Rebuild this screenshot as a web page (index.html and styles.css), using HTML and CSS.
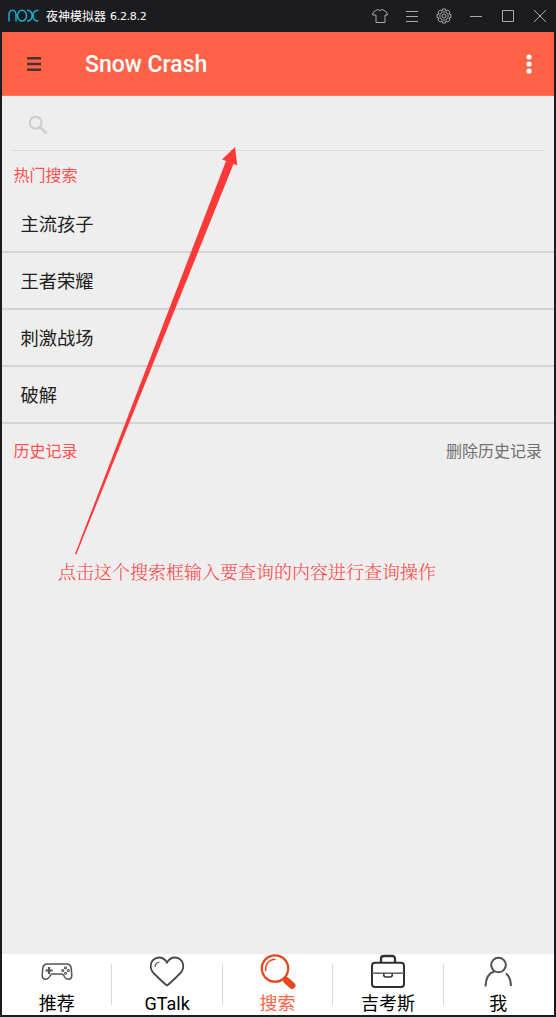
FILE: index.html
```html
<!DOCTYPE html>
<html lang="zh-CN">
<head>
<meta charset="utf-8">
<title>夜神模拟器</title>
<link rel="stylesheet" href="styles.css">
</head>
<body>
<div class="window">
  <header class="titlebar">
    <svg class="logo" width="32" height="14" viewBox="0 0 32 14" fill="none" stroke="#0fb2cf" stroke-width="1.500"><path d="M1 12.500V5.500a3.500 4.300 0 0 1 7 0v7"/><ellipse cx="14" cy="6.700" rx="4.500" ry="5.400"/><path d="M19 1.300c3.500 0 5 2.200 5 5.400s-1.500 5.400-5 5.400M30.500 1.300c-3.500 0-5.500 2.200-5.500 5.400s2 5.400 5.500 5.400"/></svg>
    <span class="caption">夜神模拟器</span><span class="version">6.2.8.2</span>
    <div class="controls">
      <svg width="16" height="16" viewBox="0 0 16 16"><path d="M5.500 1.500 1.500 4l-1 3H4v7.500h9V7h2.500l-1-3-4-2.500q-2.500 2-5 0z"/></svg>
      <svg width="16" height="16" viewBox="0 0 16 16"><path d="M2 3.500h12M2 8.500h12M2 13.500h12"/></svg>
      <svg width="16" height="16" viewBox="0 0 16 16"><path d="M6.500 1h3l.5 2 2-1 2 2-1 2 2 .5v3l-2 .5 1 2-2 2-2-1-.5 2h-3L6 13l-2 1-2-2 1-2-2-.5v-3L3 6 2 4l2-2 2 1z"/><circle cx="8" cy="8" r="4.200"/><circle cx="8" cy="8" r="2"/></svg>
      <svg width="16" height="16" viewBox="0 0 16 16"><path d="M2 8.500h12"/></svg>
      <svg width="16" height="16" viewBox="0 0 16 16"><path d="M2.500 2.500h11v11h-11z"/></svg>
      <svg width="16" height="16" viewBox="0 0 16 16"><path d="m2 2 12 12M14 2 2 14"/></svg>
    </div>
  </header>
  <div class="appbar">
    <svg class="menu" width="14" height="16" viewBox="0 0 14 16" stroke="#4a3030" stroke-width="2.500"><path d="M0 2.300h14M0 7.900h14M0 13.700h14"/></svg>
    <h1 class="title">Snow Crash</h1>
    <svg class="more" width="6" height="20" viewBox="0 0 6 20" fill="#fff"><circle cx="3" cy="3" r="2.600"/><circle cx="3" cy="10" r="2.600"/><circle cx="3" cy="17" r="2.600"/></svg>
  </div>
  <main class="content">
    <div class="search">
      <svg width="20" height="20" viewBox="0 0 20 20" fill="none" stroke="#cecece" stroke-width="2.200"><circle cx="7.700" cy="7.700" r="5.900"/><path d="m12 12 6.500 6.500" stroke-width="2.700"/></svg>
    </div>
    <div class="section hot"><span class="heading">热门搜索</span></div>
    <ul class="list">
      <li class="item">主流孩子</li>
      <li class="item">王者荣耀</li>
      <li class="item">刺激战场</li>
      <li class="item">破解</li>
    </ul>
    <div class="section history"><span class="heading">历史记录</span><span class="clear">删除历史记录</span></div>
  </main>
  <nav class="tabs">
    <div class="tab">
      <svg width="36" height="36" viewBox="0 0 36 36" fill="none" stroke="#555" stroke-width="1.500"><path d="M7.500 10h21q3.200.5 3.700 4l.6 7q.2 4-3.300 4.300-3 0-5-4.300-.8-1-2-1h-9q-1.200 0-2 1-2 4.300-5 4.300Q3 25 3.200 21l.6-7q.5-3.500 3.700-4z"/><path d="M10 13v7M6.500 16.500h7" stroke-width="2.200"/><g stroke-width="1.100"><circle cx="26.500" cy="13.700" r="1"/><circle cx="26.500" cy="19.300" r="1"/><circle cx="23.700" cy="16.500" r="1"/><circle cx="29.300" cy="16.500" r="1"/></g></svg>
      <span>推荐</span>
    </div>
    <div class="tab">
      <svg width="36" height="36" viewBox="0 0 36 36" fill="none" stroke="#484848" stroke-width="1.800"><path d="M18 31.500Q15 29.500 4.500 19C0 14 1.300 6.500 6.500 4.300c5-2 9 .3 11.500 4.200 2.500-3.900 6.500-6.200 11.500-4.200 5.200 2.200 6.500 9.700 2 14.700Q21 29.500 18 31.500z"/><path d="M6 13q.2-4.300 4.500-5" stroke-width="1.200"/></svg>
      <span>GTalk</span>
    </div>
    <div class="tab active">
      <svg width="36" height="36" viewBox="0 0 36 36" fill="none" stroke="#e6481d"><circle cx="15" cy="14.500" r="13.200" stroke-width="2.300"/><path d="M5.800 17C4.500 10.500 9 5.500 15.500 5.300" stroke-width="1.500"/><path d="m23.500 24 3 2.500" stroke-width="3"/><path d="m26.500 26.500 5.500 5" stroke-width="6.800" stroke-linecap="round"/></svg>
      <span>搜索</span>
    </div>
    <div class="tab">
      <svg width="36" height="36" viewBox="0 0 36 36" fill="none" stroke="#303030" stroke-width="2"><rect x="2" y="8.800" width="32" height="24.200" rx="3"/><path d="M11 8.500V4.800q0-2.800 2.800-2.800h8.400Q25 2 25 4.800v3.700" stroke-width="2.300"/><path d="M2 19.200h32" stroke="#666" stroke-width="1.600"/><path d="M13.800 19.500v1.500q0 2 2 2h4.400q2 0 2-2v-1.500" stroke-width="1.600"/></svg>
      <span>吉考斯</span>
    </div>
    <div class="tab">
      <svg width="36" height="36" viewBox="0 0 36 36" fill="none" stroke="#505050" stroke-width="2"><circle cx="18.500" cy="11" r="7.300"/><path d="M5.500 32.500C5.800 24 8.500 19 14.500 17.500M26 19.500c3.200 2.500 4.800 7 5 12.500"/></svg>
      <span>我</span>
    </div>
  </nav>
  <svg class="arrow" width="170" height="412" viewBox="70 145 170 412"><path fill="#fd3939" d="M235 147 237.300 165.200 233.500 164 76.300 554.500 75 554 226 161 222 159.500z"/></svg>
  <p class="note">点击这个搜索框输入要查询的内容进行查询操作</p>
</div>
</body>
</html>
```
FILE: styles.css
```css
* { box-sizing: border-box; }
body {
  margin: 0;
  font-family: Roboto, "Noto Sans CJK SC", sans-serif;
}
.window {
  position: relative;
  display: flex;
  flex-direction: column;
  height: 1017px;
  padding: 0 2px 2px;
  background: #1b1b20;
  overflow: hidden;
}
.titlebar {
  display: flex;
  align-items: center;
  flex: none;
  height: 32px;
  padding: 0 6px;
  color: #fff;
  font-size: 12px;
}
.caption { margin-left: 6px; padding-bottom: 2px; }
.version {
  margin-left: 4px;
  font-family: "DejaVu Sans", sans-serif;
  font-size: 11px;
  letter-spacing: -.3px;
}
.controls { display: flex; gap: 16px; margin-left: auto; }
.controls svg { fill: none; stroke: #aaaaac; stroke-width: 1; }
.appbar {
  display: flex;
  align-items: center;
  flex: none;
  height: 64px;
  padding: 0 22px 0 25px;
  background: #ff6347;
  border-bottom: 1px solid #f87961;
}
.title {
  margin: 0 0 0 44px;
  padding-top: 2px;
  color: #fff;
  font-size: 23px;
  font-weight: 500;
}
.more { margin-left: auto; }
.content { flex: 1; background: #eee; }
.search {
  height: 55px;
  margin: 0 10px;
  padding: 19px 0 0 16px;
  border-bottom: 1px solid #dadada;
}
.section {
  display: flex;
  justify-content: space-between;
  align-items: center;
  padding: 0 12px 0 11.500px;
  font-size: 16px;
}
.hot { height: 45px; }
.history { height: 52px; }
.heading { color: #ff5151; }
.clear { color: #707070; }
.list { margin: 0; padding: 0; list-style: none; }
.item {
  height: 57px;
  padding-left: 18.500px;
  border-bottom: 2px solid #d3d3d3;
  color: #202020;
  font-size: 18.300px;
  line-height: 57px;
}
.tabs {
  display: flex;
  flex: none;
  height: 61px;
  background: #fff;
}
.tab {
  position: relative;
  display: flex;
  flex: 1;
  flex-direction: column;
  align-items: center;
  padding-right: 1px;
  color: #000;
  font-size: 18px;
  line-height: 28px;
}
.tab + .tab::before {
  content: "";
  position: absolute;
  left: -1px;
  top: 10px;
  width: 1px;
  height: 41px;
  background: #d8d8d8;
}
.tab svg { flex: none; }
.tab span { height: 25px; }
.active { color: #ff6347; }
.arrow { position: absolute; left: 70px; top: 145px; }
.note {
  position: absolute;
  left: 58px;
  top: 558px;
  margin: 0;
  color: #fd4141;
  font-family: "Noto Serif CJK SC", "Noto Sans CJK SC", serif;
  font-size: 18px;
  font-weight: 300;
  line-height: 26px;
  white-space: nowrap;
}
```
